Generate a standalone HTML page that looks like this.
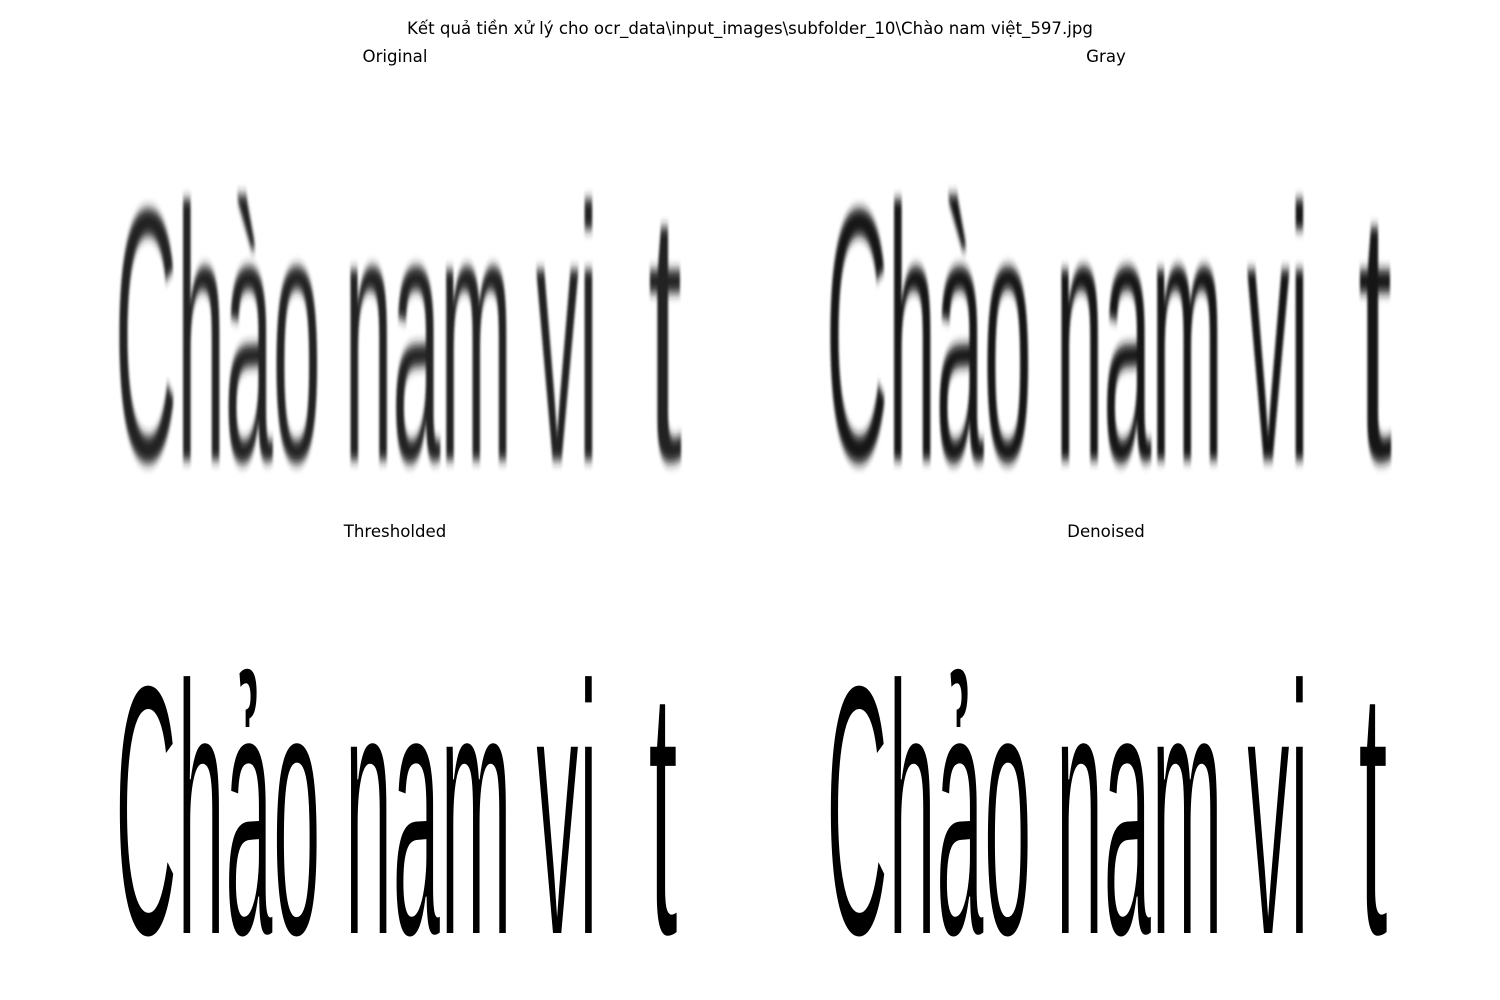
<!DOCTYPE html>
<html><head><meta charset="utf-8"><style>
html,body{margin:0;padding:0;background:#fff;}
body{width:1500px;height:1000px;position:relative;overflow:hidden;font-family:"DejaVu Sans","Liberation Sans",sans-serif;}
.t{position:absolute;font-size:16.6px;color:#000;transform:translateX(-50%);white-space:nowrap;line-height:1;}
svg{position:absolute;left:0;top:0;}
</style></head><body>
<div class="t" style="left:750px;top:21px">Kết quả tiền xử lý cho ocr_data\input_images\subfolder_10\Chào nam việt_597.jpg</div>
<div class="t" style="left:395px;top:49px">Original</div>
<div class="t" style="left:1106px;top:49px">Gray</div>
<div class="t" style="left:395px;top:524px">Thresholded</div>
<div class="t" style="left:1106px;top:524px">Denoised</div>
<svg width="1500" height="1000" viewBox="0 0 1500 1000">
<defs><filter id="b" x="-5%" y="-5%" width="110%" height="110%"><feGaussianBlur stdDeviation="1.1"/></filter></defs>
<g font-family="Liberation Sans, sans-serif" font-size="72">
<g transform="scale(1,5.0)" fill="#222" filter="url(#b)">
<text x="115" y="92" textLength="483" lengthAdjust="spacingAndGlyphs">Chào nam vi</text>
<text x="648" y="92" textLength="34" lengthAdjust="spacingAndGlyphs">t</text>
<text x="826" y="92" textLength="483" lengthAdjust="spacingAndGlyphs" fill="#181818">Chào nam vi</text>
<text x="1358" y="92" textLength="34" lengthAdjust="spacingAndGlyphs" fill="#181818">t</text>
</g>
<g transform="scale(1,5.0)" fill="#000" stroke="#fff" stroke-width="0.8">
<text x="115" y="187" textLength="483" lengthAdjust="spacingAndGlyphs">Chảo nam vi</text>
<text x="648" y="187" textLength="30" lengthAdjust="spacingAndGlyphs">t</text>
<text x="826" y="187" textLength="483" lengthAdjust="spacingAndGlyphs">Chảo nam vi</text>
<text x="1358" y="187" textLength="30" lengthAdjust="spacingAndGlyphs">t</text>
</g>
</g>
</svg>
</body></html>
